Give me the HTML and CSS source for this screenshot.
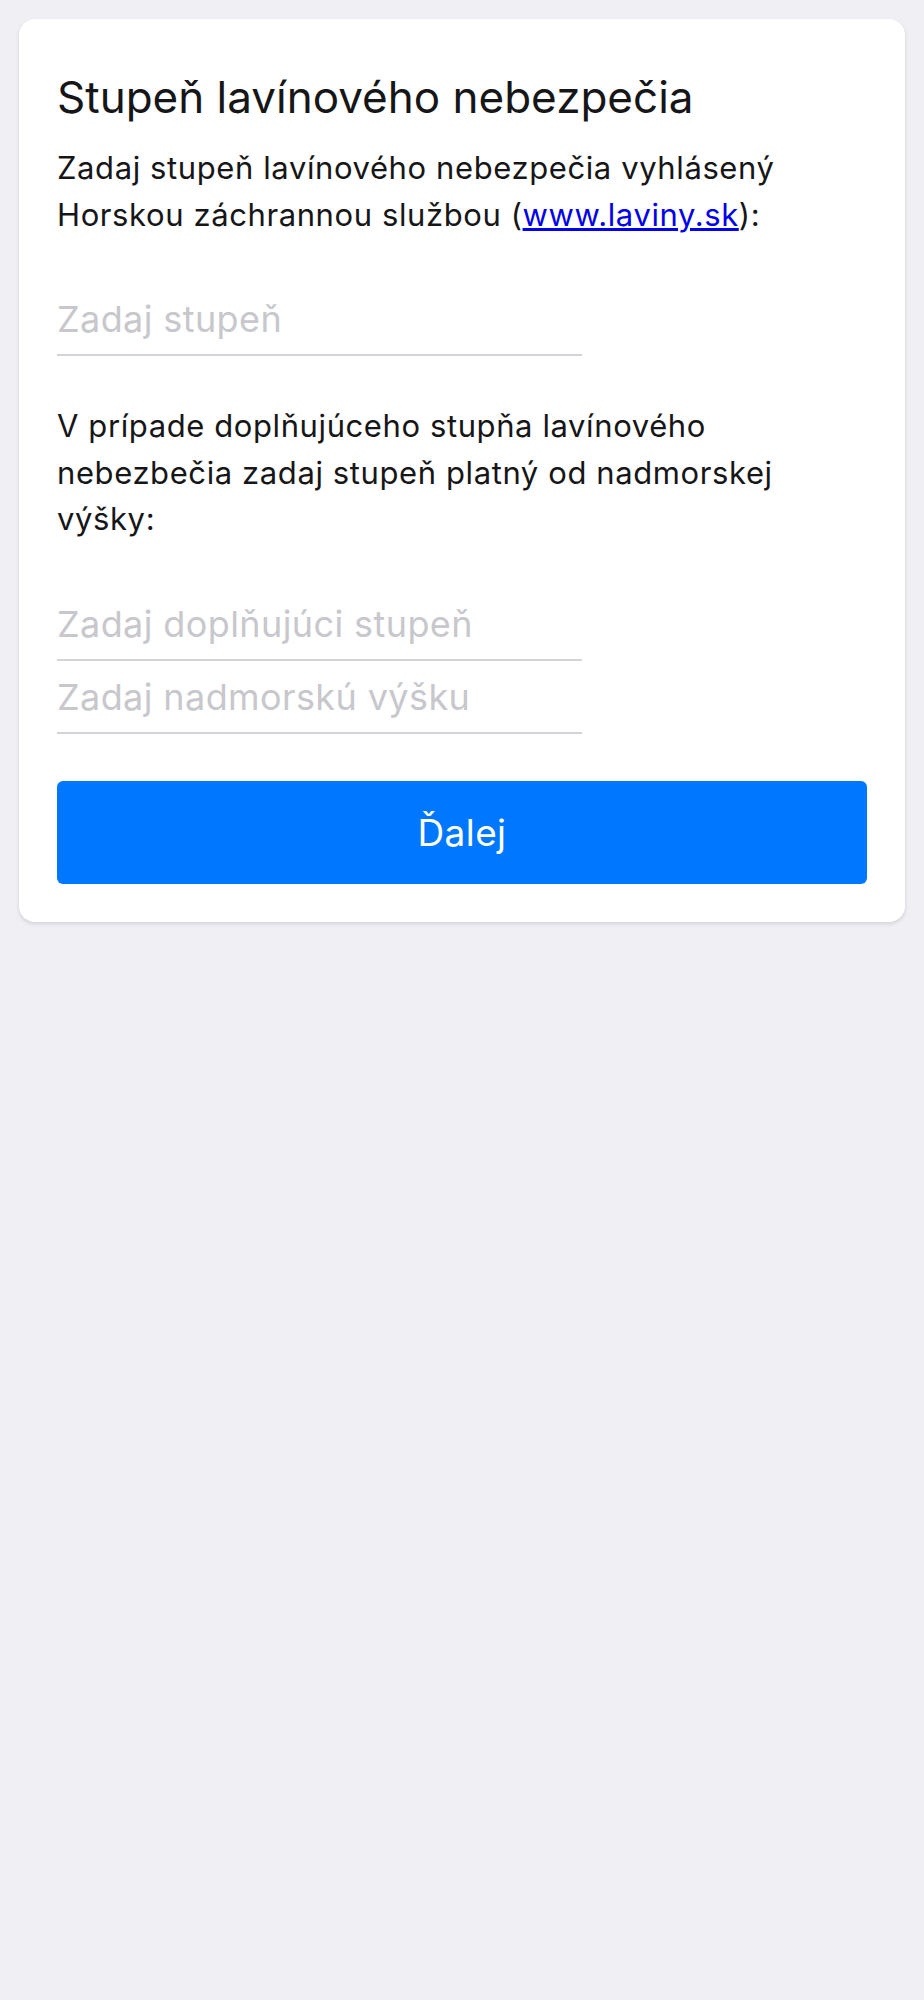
FILE: index.html
```html
<!DOCTYPE html>
<html lang="sk">
<head>
    <meta charset="UTF-8">
    <meta name="viewport" content="width=device-width, initial-scale=1.0">
    <title>Stupeň lavínového nebezpečia</title>
    <link rel="stylesheet" href="styles.css">
</head>
<body>
    <div class="card">
        <h1>Stupeň lavínového nebezpečia</h1>
        <p class="intro">Zadaj stupeň lavínového nebezpečia vyhlásený Horskou záchrannou službou (<a href="#">www.laviny.sk</a>):</p>

        <div class="field-group">
            <input type="text" class="field" placeholder="Zadaj stupeň">
        </div>

        <p class="note">V prípade doplňujúceho stupňa lavínového nebezbečia zadaj stupeň platný od nadmorskej výšky:</p>

        <div class="field-group">
            <input type="text" class="field" placeholder="Zadaj doplňujúci stupeň">
            <input type="text" class="field" placeholder="Zadaj nadmorskú výšku">
        </div>

        <button class="next-btn">Ďalej</button>
    </div>
</body>
</html>
```

FILE: styles.css
```css
body {
    margin: 0;
    padding: 19px;
    background-color: #efeff4; /* sivé pozadie ako v iOS */
    font-family: Inter, "Noto Sans", sans-serif;
    color: #161618;
}
.card {
    background-color: #ffffff;
    border-radius: 16px;
    padding: 38px;
    box-shadow: 0 2px 4px rgba(0, 0, 0, 0.12);
}
h1 {
    margin: 14px 0 0;
    font-size: 44px;
    font-weight: 400;
    line-height: 53px;
}
.intro, .note {
    font-size: 31px;
    line-height: 46.5px;
    letter-spacing: 0.6px;
    margin: 0;
}
.intro {
    margin-top: 21px;
}
.note {
    margin-top: 47px;
}
.intro a {
    color: #0000ee;
}
.field-group {
    margin-top: 45px;
    display: flex;
    flex-direction: column;
}
.field {
    width: 525px;
    box-sizing: border-box;
    border: none;
    border-bottom: 2px solid #d4d4d8;
    padding: 14px 0 13px;
    font-family: inherit;
    font-size: 36px;
    line-height: 44px;
    letter-spacing: 0.4px;
    color: #161618;
    outline: none;
    background: transparent;
}
.field::placeholder {
    color: #c7c7cc;
}
.next-btn {
    display: block;
    width: 100%;
    height: 103px;
    margin-top: 47px;
    border: none;
    border-radius: 6px;
    background-color: #0077ff;
    color: #ffffff;
    font-family: inherit;
    font-size: 37px;
    letter-spacing: 0.4px;
    cursor: pointer;
}
```
